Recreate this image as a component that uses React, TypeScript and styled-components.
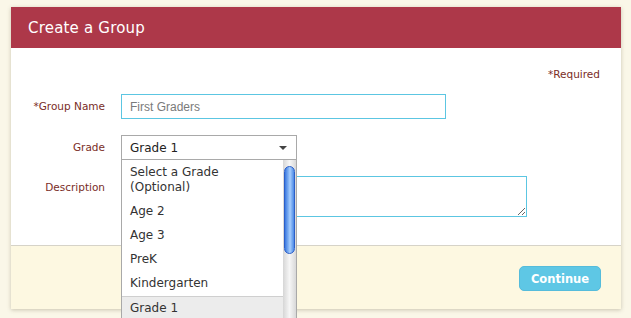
import styled, { createGlobalStyle } from 'styled-components';

const GlobalStyle = createGlobalStyle`
  body {
    margin: 0;
    background: #faf7e8;
    font-family: "DejaVu Sans", Verdana, sans-serif;
  }
`;

const Page = styled.div`
  width: 631px;
  height: 318px;
  overflow: hidden;
  padding: 7px 10px 0 11px;
  box-sizing: border-box;
`;

const Modal = styled.div`
  width: 610px;
  box-shadow: 0 1px 4px rgba(90, 80, 50, 0.3);
`;

const Header = styled.div`
  height: 41px;
  background: #ad3849;
  display: flex;
  align-items: center;
  padding-left: 17px;
`;

const Title = styled.h1`
  margin: 0;
  font-size: 15px;
  font-weight: normal;
  color: #fff;
  letter-spacing: 0.2px;
`;

const Body = styled.div`
  background: #fff;
  height: 197px;
  box-sizing: border-box;
  padding: 19px 21px 0 0;
`;

const Required = styled.div`
  text-align: right;
  font-size: 10.5px;
  line-height: 14px;
  color: #7a2d27;
  margin-bottom: 13px;
`;

const Form = styled.div`
  display: grid;
  grid-template-columns: 94px auto;
  column-gap: 16px;
  row-gap: 16px;
  align-items: start;
`;

const Label = styled.label<{ $top?: boolean }>`
  text-align: right;
  font-size: 10.5px;
  color: #7a2d27;
  line-height: ${(p) => (p.$top ? '22px' : '25px')};
`;

const TextInput = styled.input`
  width: 325px;
  height: 25px;
  box-sizing: border-box;
  border: 1px solid #5cc6e2;
  padding: 0 8px;
  font-family: "Liberation Sans", Arial, sans-serif;
  font-size: 12px;
  outline: none;
  &::placeholder {
    color: #7a7a7a;
  }
`;

const SelectWrap = styled.div`
  position: relative;
  width: 176px;
`;

const SelectBox = styled.div`
  height: 25px;
  box-sizing: border-box;
  border: 1px solid #a9a9a9;
  background: #fff;
  display: flex;
  align-items: center;
  justify-content: space-between;
  padding: 0 9px 0 8px;
  font-size: 12px;
  color: #222;
`;

const Arrow = styled.span`
  width: 0;
  height: 0;
  border-left: 4px solid transparent;
  border-right: 4px solid transparent;
  border-top: 4px solid #444;
`;

const List = styled.div`
  position: absolute;
  top: 100%;
  left: 0;
  width: 176px;
  height: 200px;
  box-sizing: border-box;
  border: 1px solid #a9a9a9;
  border-top: none;
  background: #fff;
  display: flex;
  z-index: 2;
`;

const Options = styled.div`
  flex: 1;
`;

const Option = styled.div<{ $selected?: boolean; $first?: boolean }>`
  box-sizing: border-box;
  height: ${(p) => (p.$first ? '40px' : '24px')};
  padding: ${(p) => (p.$first ? '5px' : '4px')} 8px 0;
  font-size: 12px;
  line-height: 15px;
  color: #333;
  background: ${(p) => (p.$selected ? '#ececec' : '#fff')};
  border-top: ${(p) => (p.$selected ? '1px solid #cfcfcf' : 'none')};
`;

const Track = styled.div`
  width: 13px;
  background: linear-gradient(to right, #d6d6d6, #f6f6f6 50%, #d8d8d8);
  padding: 6px 1px 0;
  box-sizing: border-box;
`;

const Thumb = styled.div`
  height: 88px;
  border-radius: 6px;
  border: 1px solid #2c5fc8;
  background: linear-gradient(to right, #3a78e0, #8fbdf8 45%, #a9cffd 55%, #4a88e6);
  box-sizing: border-box;
`;

const TextArea = styled.textarea`
  width: 406px;
  height: 41px;
  box-sizing: border-box;
  border: 1px solid #5cc6e2;
  outline: none;
  display: block;
  font-family: "Liberation Sans", Arial, sans-serif;
  font-size: 12px;
`;

const Footer = styled.div`
  height: 64px;
  box-sizing: border-box;
  background: #fdf8e1;
  border-top: 1px solid #d6d3c8;
  display: flex;
  justify-content: flex-end;
  align-items: center;
  padding: 2px 20px 0 0;
`;

const Button = styled.button`
  width: 82px;
  height: 25px;
  border-radius: 5px;
  border: 1px solid #55bcdb;
  background: #5ec7e5;
  color: #fff;
  font-family: "DejaVu Sans", Verdana, sans-serif;
  font-weight: bold;
  font-size: 11.5px;
  padding: 0;
`;

const grades = ['Age 2', 'Age 3', 'PreK', 'Kindergarten'];

function App() {
  return (
    <>
      <GlobalStyle />
      <Page>
        <Modal>
          <Header>
            <Title>Create a Group</Title>
          </Header>
          <Body>
            <Required>*Required</Required>
            <Form>
              <Label>*Group Name</Label>
              <TextInput placeholder='First Graders' />
              <Label>Grade</Label>
              <SelectWrap>
                <SelectBox>
                  <span>Grade 1</span>
                  <Arrow />
                </SelectBox>
                <List>
                  <Options>
                    <Option $first>
                      Select a Grade
                      <br />
                      (Optional)
                    </Option>
                    {grades.map((g) => (
                      <Option key={g}>{g}</Option>
                    ))}
                    <Option $selected>Grade 1</Option>
                  </Options>
                  <Track>
                    <Thumb />
                  </Track>
                </List>
              </SelectWrap>
              <Label $top>Description</Label>
              <TextArea />
            </Form>
          </Body>
          <Footer>
            <Button>Continue</Button>
          </Footer>
        </Modal>
      </Page>
    </>
  );
}
export default App;
